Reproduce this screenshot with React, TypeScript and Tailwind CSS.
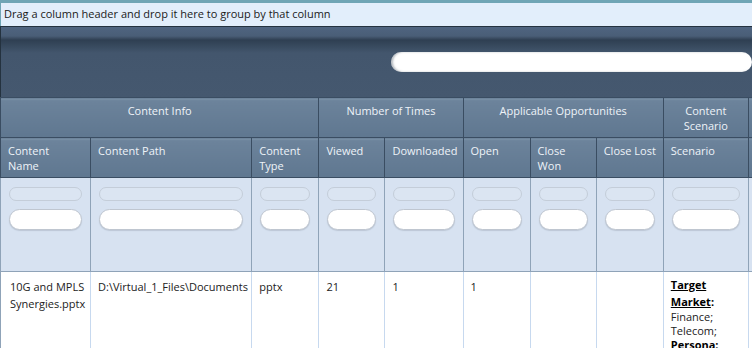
import React, { FC, ReactNode } from "react";

const groups = [
  { label: "Content Info", span: 3 },
  { label: "Number of Times", span: 2 },
  { label: "Applicable Opportunities", span: 3 },
  { label: "Content Scenario", span: 1 },
  { label: "", span: 1 },
];

const columns: { label: ReactNode; w: number }[] = [
  { label: <>Content<br />Name</>, w: 90 },
  { label: "Content Path", w: 161 },
  { label: <>Content<br />Type</>, w: 67 },
  { label: "Viewed", w: 66 },
  { label: "Downloaded", w: 78 },
  { label: "Open", w: 67 },
  { label: <>Close<br />Won</>, w: 66 },
  { label: "Close Lost", w: 67 },
  { label: "Scenario", w: 85 },
  { label: "", w: 80 },
];

const headCell =
  "border border-[#3a4d62] bg-[linear-gradient(#8196ab_0px,#6c839b_2px,#5f7790_100%)] align-top font-normal text-[#eef3f8]";

const dataCell = "border-l border-[#c7d9ef] pl-[7px] pr-[3px] pt-[6px] align-top leading-[17px]";

const App: FC = () => {
  return (
    <div
      className="h-[348px] w-[752px] overflow-hidden bg-white text-[11px]"
      style={{ fontFamily: '"Open Sans", "Noto Sans", sans-serif' }}
    >
      {/* group-by panel */}
      <div className="h-[26px] border-l border-t-[3px] border-[#6fa5b5] bg-[#e2eefb] pl-[3px] leading-[21px] text-[#1a1a1a]">
        Drag a column header and drop it here to group by that column
      </div>

      {/* toolbar with search */}
      <div className="flex h-[71px] items-start border-l border-t border-[#24323f] bg-[linear-gradient(#4f6480_0px,#4a5e77_9px,#2f3f52_13px,#36485c_18px,#43566d_26px,#45586f_100%)] pl-[390px] pt-[25px]">
        <div className="h-[20px] w-[400px] rounded-full bg-white shadow-[inset_2px_0_2px_rgba(120,130,140,0.5)]" />
      </div>

      <table className="w-[829px] table-fixed border-collapse">
        <colgroup>
          {columns.map((c, i) => (
            <col key={i} style={{ width: c.w }} />
          ))}
        </colgroup>
        <thead>
          <tr className="h-[40px]">
            {groups.map((g, i) => (
              <th
                key={i}
                colSpan={g.span}
                className={`${headCell} px-2 pt-[5px] text-center leading-[15px]`}
              >
                {g.label === "Content Scenario" ? (
                  <>
                    Content
                    <br />
                    Scenario
                  </>
                ) : (
                  g.label
                )}
              </th>
            ))}
          </tr>
          <tr className="h-[40px]">
            {columns.map((c, i) => (
              <th key={i} className={`${headCell} pl-[7px] pr-[3px] pt-[5px] text-left leading-[15px]`}>
                {c.label}
              </th>
            ))}
          </tr>
          <tr className="h-[94px]">
            {columns.map((c, i) => (
              <td
                key={i}
                className="border-y border-l border-[#8fa3b8] bg-[#d7e2f1] px-2 align-top"
              >
                {c.label && (
                  <div className="flex flex-col gap-[8px] pt-[9px]">
                    <div className="h-[14px] rounded-full border border-[#c4cdd9] bg-[#dbe5f2]" />
                    <div className="h-[21px] rounded-full border border-[#bfc6d0] bg-white shadow-[0_1px_1px_rgba(150,160,175,0.4)]" />
                  </div>
                )}
              </td>
            ))}
          </tr>
        </thead>
        <tbody>
          <tr className="h-[100px] text-[#222]">
            <td className="border-l border-[#8fa3b8] pl-[9px] pr-[2px] pt-[6px] align-top leading-[17px]">
              10G and MPLS Synergies.pptx
            </td>
            <td className={dataCell}>D:\Virtual_1_Files\Documents</td>
            <td className={dataCell}>pptx</td>
            <td className={dataCell}>21</td>
            <td className={dataCell}>1</td>
            <td className={dataCell}>1</td>
            <td className={dataCell} />
            <td className={dataCell} />
            <td className="border-l border-[#c7d9ef] pl-[7px] pr-[3px] pt-[4px] align-top">
              <div className="font-bold leading-[17px] text-black">
                <span className="underline">Target Market</span>:
              </div>
              <div className="leading-[14px]">Finance;</div>
              <div className="leading-[14px]">Telecom;</div>
              <div className="font-bold leading-[14px] text-black">
                <span className="underline">Persona</span>:
              </div>
            </td>
            <td className="border-x border-[#c7d9ef] px-2 align-top" />
          </tr>
        </tbody>
      </table>
    </div>
  );
};

export default App;
